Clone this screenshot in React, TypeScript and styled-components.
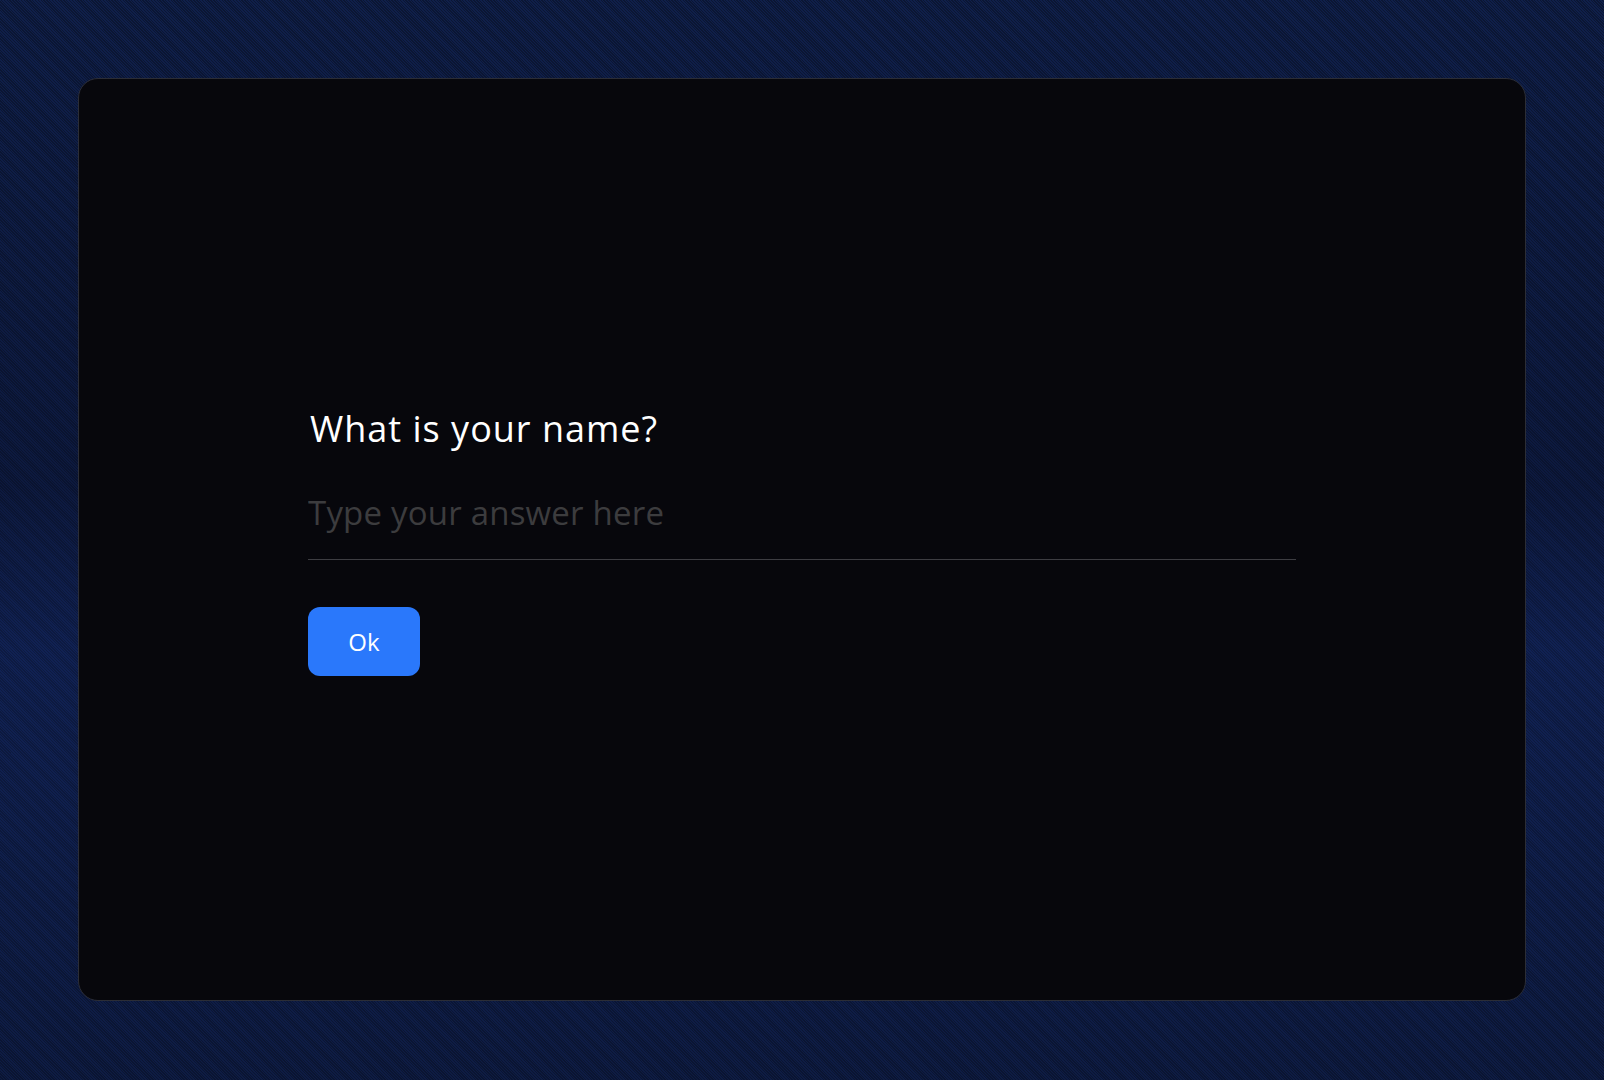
import React from "react";
import styled, { createGlobalStyle } from "styled-components";

const Global = createGlobalStyle`
  html, body { margin: 0; padding: 0; }
  body {
    font-family: "Open Sans", "Noto Sans", sans-serif;
    background: #0c1838;
  }
  * { box-sizing: border-box; }
`;

const Page = styled.div`
  width: 1604px;
  height: 1080px;
  padding: 78px 78px 79px 78px;
  display: flex;
  background:
    linear-gradient(180deg, rgba(8,14,40,0.0) 0%, rgba(8,14,40,0.35) 45%, rgba(20,40,110,0.25) 60%, rgba(8,14,40,0.2) 100%),
    repeating-linear-gradient(45deg, #0b1633 0px, #0b1633 1px, #0f1f4a 1px, #0f1f4a 2px);
`;

const Card = styled.main`
  flex: 1;
  border: 1px solid #2b2d36;
  border-radius: 20px;
  background: #07070c;
  display: flex;
  align-items: center;
  justify-content: center;
`;

const Form = styled.form`
  width: 988px;
  display: flex;
  flex-direction: column;
  align-items: flex-start;
  margin-top: 4px;
`;

const Question = styled.h1`
  margin: 0 0 42px 2px;
  font-size: 36px;
  font-weight: 400;
  letter-spacing: 1px;
  line-height: 44px;
  color: #ffffff;
`;

const AnswerInput = styled.input`
  width: 100%;
  background: transparent;
  border: none;
  border-bottom: 1px solid #3d3d42;
  padding: 0 0 26px 0;
  font-family: inherit;
  font-size: 33px;
  letter-spacing: 0.2px;
  line-height: 40px;
  color: #ffffff;
  outline: none;
  &::placeholder { color: #3c3c3e; }
`;

const OkButton = styled.button`
  margin-top: 47px;
  width: 112px;
  height: 69px;
  border: none;
  border-radius: 12px;
  background: #2a78fb;
  color: #ffffff;
  font-family: inherit;
  font-size: 24px;
  cursor: pointer;
`;

export default function App() {
  return (
    <>
      <Global />
      <Page>
        <Card>
          <Form onSubmit={(e) => e.preventDefault()}>
            <Question>What is your name?</Question>
            <AnswerInput placeholder="Type your answer here" />
            <OkButton type="submit">Ok</OkButton>
          </Form>
        </Card>
      </Page>
    </>
  );
}
